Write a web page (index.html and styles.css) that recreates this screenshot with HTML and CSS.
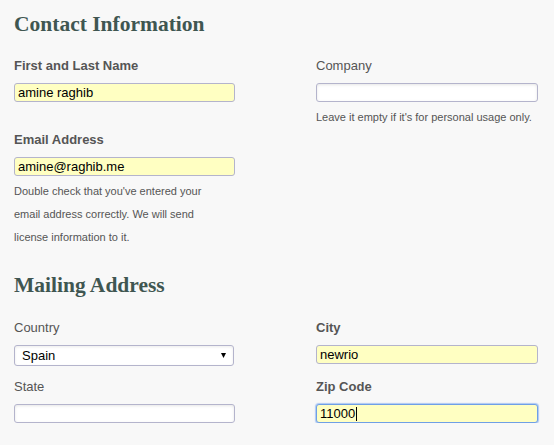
FILE: index.html
```html
<!DOCTYPE html>
<html lang="en">
<head>
<meta charset="utf-8">
<title>Contact Information</title>
<link rel="stylesheet" href="styles.css">
</head>
<body>
<main class="form">
  <section class="section">
    <h2 class="section-title">Contact Information</h2>
    <div class="grid contact">
      <div class="field">
        <label class="label req">First and Last Name</label>
        <input class="input filled" type="text" value="amine raghib">
      </div>
      <div class="field">
        <label class="label">Company</label>
        <input class="input" type="text" value="">
        <p class="help">Leave it empty if it's for personal usage only.</p>
      </div>
      <div class="field">
        <label class="label req">Email Address</label>
        <input class="input filled" type="text" value="amine@raghib.me">
        <p class="help">Double check that you've entered your<br>email address correctly. We will send<br>license information to it.</p>
      </div>
    </div>
  </section>
  <section class="section mailing">
    <h2 class="section-title">Mailing Address</h2>
    <div class="grid">
      <div class="field">
        <label class="label">Country</label>
        <div class="select">
          <span>Spain</span>
          <svg class="arrow" width="5" height="5" viewBox="0 0 5 5"><polygon points="0,0 5,0 2.5,5" fill="#000"/></svg>
        </div>
      </div>
      <div class="field">
        <label class="label req">City</label>
        <input class="input filled city" type="text" value="newrio">
      </div>
      <div class="field">
        <label class="label">State</label>
        <input class="input" type="text" value="">
      </div>
      <div class="field">
        <label class="label req">Zip Code</label>
        <div class="input filled focus">11000<span class="caret"></span></div>
      </div>
    </div>
  </section>
</main>
</body>
</html>
```
FILE: styles.css
```css
html, body {
  margin: 0;
  background: #f8f8f8;
}
body {
  font-family: "Liberation Sans", Arial, sans-serif;
  color: #555;
}
.form {
  padding: 12px 16px 0 14px;
}
.section-title {
  margin: 0 0 20px;
  font: bold 21.5px/24px "Liberation Serif", "Times New Roman", serif;
  color: #3f5651;
}
.mailing {
  margin-top: 24px;
}
.mailing .section-title {
  margin-bottom: 21px;
}
.grid {
  display: grid;
  grid-template-columns: 221px 222px;
  column-gap: 81px;
  align-items: start;
}
.contact {
  row-gap: 1px;
}
.mailing .grid {
  row-gap: 11px;
}
.label {
  display: block;
  font-size: 13px;
  line-height: 20px;
  margin-bottom: 7px;
}
.label.req {
  font-weight: bold;
}
.input {
  display: block;
  box-sizing: border-box;
  width: 100%;
  height: 19px;
  margin: 0;
  padding: 0 3px;
  border: 1px solid #b4b4cc;
  border-radius: 3px;
  background: #fff;
  box-shadow: inset 0 1px 3px rgba(0, 0, 0, 0.1);
  font: 13px "Liberation Sans", Arial, sans-serif;
  color: #000;
  outline: none;
}
.input.filled {
  background: #ffffc2;
  box-shadow: none;
}
.input.city {
  margin-top: 1px;
}
.input.focus {
  display: flex;
  align-items: center;
  border-color: #6f9fe6;
  box-shadow: 0 0 1px 1px rgba(110, 160, 240, 0.55);
  margin-top: 1px;
}
.caret {
  display: inline-block;
  width: 1px;
  height: 14px;
  background: #000;
  margin-left: 1px;
}
.help {
  margin: 4px 0 0;
  font-size: 11px;
  line-height: 23px;
}
.select {
  display: flex;
  align-items: center;
  justify-content: space-between;
  box-sizing: border-box;
  width: 220px;
  height: 21px;
  padding: 0 7px 0 7px;
  border: 1px solid #b4b4cc;
  border-radius: 3px;
  background: #fff;
  box-shadow: inset 0 1px 3px rgba(0, 0, 0, 0.08);
  font-size: 13px;
  color: #000;
}
.arrow {
  display: block;
}
```
